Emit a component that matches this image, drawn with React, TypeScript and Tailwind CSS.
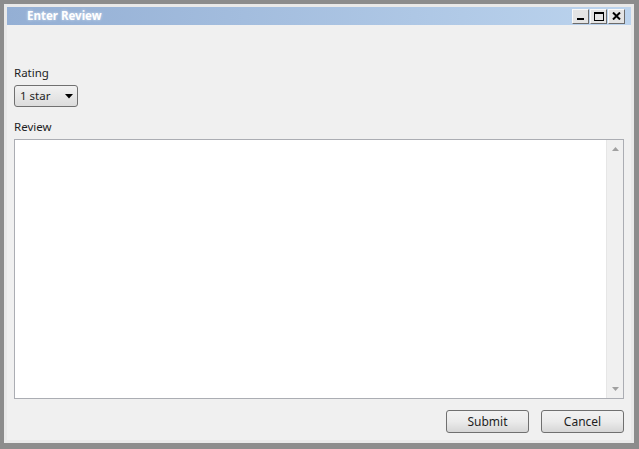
import React from "react";

export default function App() {
  const font = { fontFamily: '"Segoe UI", "Noto Sans", "Open Sans", sans-serif' };
  return (
    <div className="w-[639px] h-[449px] bg-[#8c8c8c] pt-[4px] pl-[4px] pr-[5px] pb-[6px]" style={font}>
      <div className="w-full h-full border-[3px] border-[#e9e9e9] bg-[#f0f0f0] flex flex-col">
        {/* title bar */}
        <div className="h-[18px] flex items-center bg-gradient-to-r from-[#94afd4] to-[#bcd4ee] pl-[20px] pr-[6px]">
          <span className="text-[11.5px] font-bold text-white leading-none flex-1 [text-shadow:0_0_3px_rgba(255,255,255,0.6)]">
            Enter Review
          </span>
          <div className="flex gap-[1px]">
            <div className="w-[17px] h-[15px] bg-[#e4e4e4] border border-[#f8f8f8] border-r-[#6b6b6b] border-b-[#6b6b6b] flex items-end justify-center pb-[3px]">
              <div className="w-[7px] h-[2px] bg-black" />
            </div>
            <div className="w-[17px] h-[15px] bg-[#e4e4e4] border border-[#f8f8f8] border-r-[#6b6b6b] border-b-[#6b6b6b] flex items-center justify-center">
              <div className="w-[10px] h-[9px] border border-black border-t-2" />
            </div>
            <div className="w-[17px] h-[15px] bg-[#e4e4e4] border border-[#f8f8f8] border-r-[#6b6b6b] border-b-[#6b6b6b] flex items-center justify-center">
              <svg width="9" height="8" viewBox="0 0 9 8">
                <path d="M1 0.5 L8 7.5 M8 0.5 L1 7.5" stroke="black" strokeWidth="2" />
              </svg>
            </div>
          </div>
        </div>
        {/* body */}
        <div className="flex-1 flex flex-col pl-[7px] pr-[7px] pt-[40px] text-[11.5px] text-[#1e1e1e]">
          <div className="leading-[16px]">Rating</div>
          <div className="mt-[4px] w-[64px] h-[22px] rounded-[3px] border border-[#707070] bg-gradient-to-b from-[#f2f2f2] to-[#dcdcdc] flex items-center pl-[5px] pr-[4px]">
            <span className="flex-1 leading-none">1 star</span>
            <svg width="8" height="5" viewBox="0 0 8 5">
              <path d="M0 0 H8 L4 4.5 Z" fill="black" />
            </svg>
          </div>
          <div className="mt-[12px] leading-[16px]">Review</div>
          <div className="mt-[4px] h-[260px] border border-[#abadb3] bg-white flex">
            <div className="flex-1" />
            <div className="w-[17px] bg-[#f0f0f0] flex flex-col items-center justify-between py-[7px] border-l border-[#e6e6e6]">
              <svg width="7" height="4" viewBox="0 0 7 4">
                <path d="M0 4 H7 L3.5 0 Z" fill="#a0a0a0" />
              </svg>
              <svg width="7" height="4" viewBox="0 0 7 4">
                <path d="M0 0 H7 L3.5 4 Z" fill="#a0a0a0" />
              </svg>
            </div>
          </div>
          <div className="mt-[11px] flex justify-end gap-[12px]">
            <button className="w-[83px] h-[23px] rounded-[3px] border border-[#707070] bg-gradient-to-b from-[#f2f2f2] via-[#ebebeb] to-[#d6d6d6] text-[12px] leading-none">
              Submit
            </button>
            <button className="w-[83px] h-[23px] rounded-[3px] border border-[#707070] bg-gradient-to-b from-[#f2f2f2] via-[#ebebeb] to-[#d6d6d6] text-[12px] leading-none">
              Cancel
            </button>
          </div>
        </div>
      </div>
    </div>
  );
}
